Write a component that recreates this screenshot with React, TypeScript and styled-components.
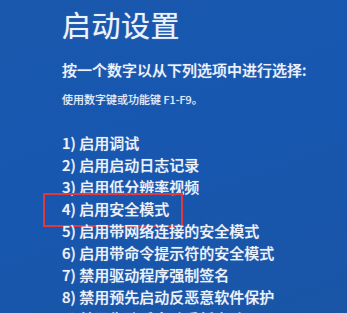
import React from "react";
import styled, { createGlobalStyle } from "styled-components";

const Global = createGlobalStyle`
  html, body { margin: 0; padding: 0; }
  body {
    width: 347px;
    height: 313px;
    overflow: hidden;
    font-family: "Noto Sans CJK SC", "Noto Sans", sans-serif;
  }
`;

const Screen = styled.div`
  width: 347px;
  height: 313px;
  overflow: hidden;
  box-sizing: border-box;
  padding: 6px 0 0 62px;
  background: linear-gradient(160deg, #1a58ad 0%, #1757b0 45%, #1a55a6 100%);
  color: #eef3fb;
  text-shadow: 0 0 1px rgba(255, 255, 255, 0.55);
`;

const Title = styled.h1`
  margin: 0;
  font-size: 29px;
  line-height: 36px;
  font-weight: 400;
  letter-spacing: 0.5px;
`;

const Prompt = styled.p`
  margin: 18px 0 0;
  font-size: 15px;
  line-height: 20px;
  font-weight: 500;
`;

const Hint = styled.p`
  margin: 11px 0 0;
  font-size: 11px;
  line-height: 16px;
`;

const Options = styled.ol`
  list-style: none;
  margin: 25px 0 0;
  padding: 0;
`;

const Option = styled.li<{ $selected?: boolean }>`
  position: relative;
  font-size: 15px;
  line-height: 22px;
  font-weight: 500;
  white-space: nowrap;
  &::before {
    content: "";
    display: ${(p) => (p.$selected ? "block" : "none")};
    position: absolute;
    left: -19px;
    top: -5px;
    width: 140px;
    height: 34px;
    box-sizing: border-box;
    border: 2.5px solid #dc3a3c;
  }
`;

const items = [
  "启用调试",
  "启用启动日志记录",
  "启用低分辨率视频",
  "启用安全模式",
  "启用带网络连接的安全模式",
  "启用带命令提示符的安全模式",
  "禁用驱动程序强制签名",
  "禁用预先启动反恶意软件保护",
  "禁用失败后自动重新启动",
];

export default function App() {
  return (
    <>
      <Global />
      <Screen>
        <Title>启动设置</Title>
        <Prompt>按一个数字以从下列选项中进行选择:</Prompt>
        <Hint>使用数字键或功能键 F1-F9。</Hint>
        <Options>
          {items.map((t, i) => (
            <Option key={t} $selected={i === 3}>
              {i + 1}) {t}
            </Option>
          ))}
        </Options>
      </Screen>
    </>
  );
}
